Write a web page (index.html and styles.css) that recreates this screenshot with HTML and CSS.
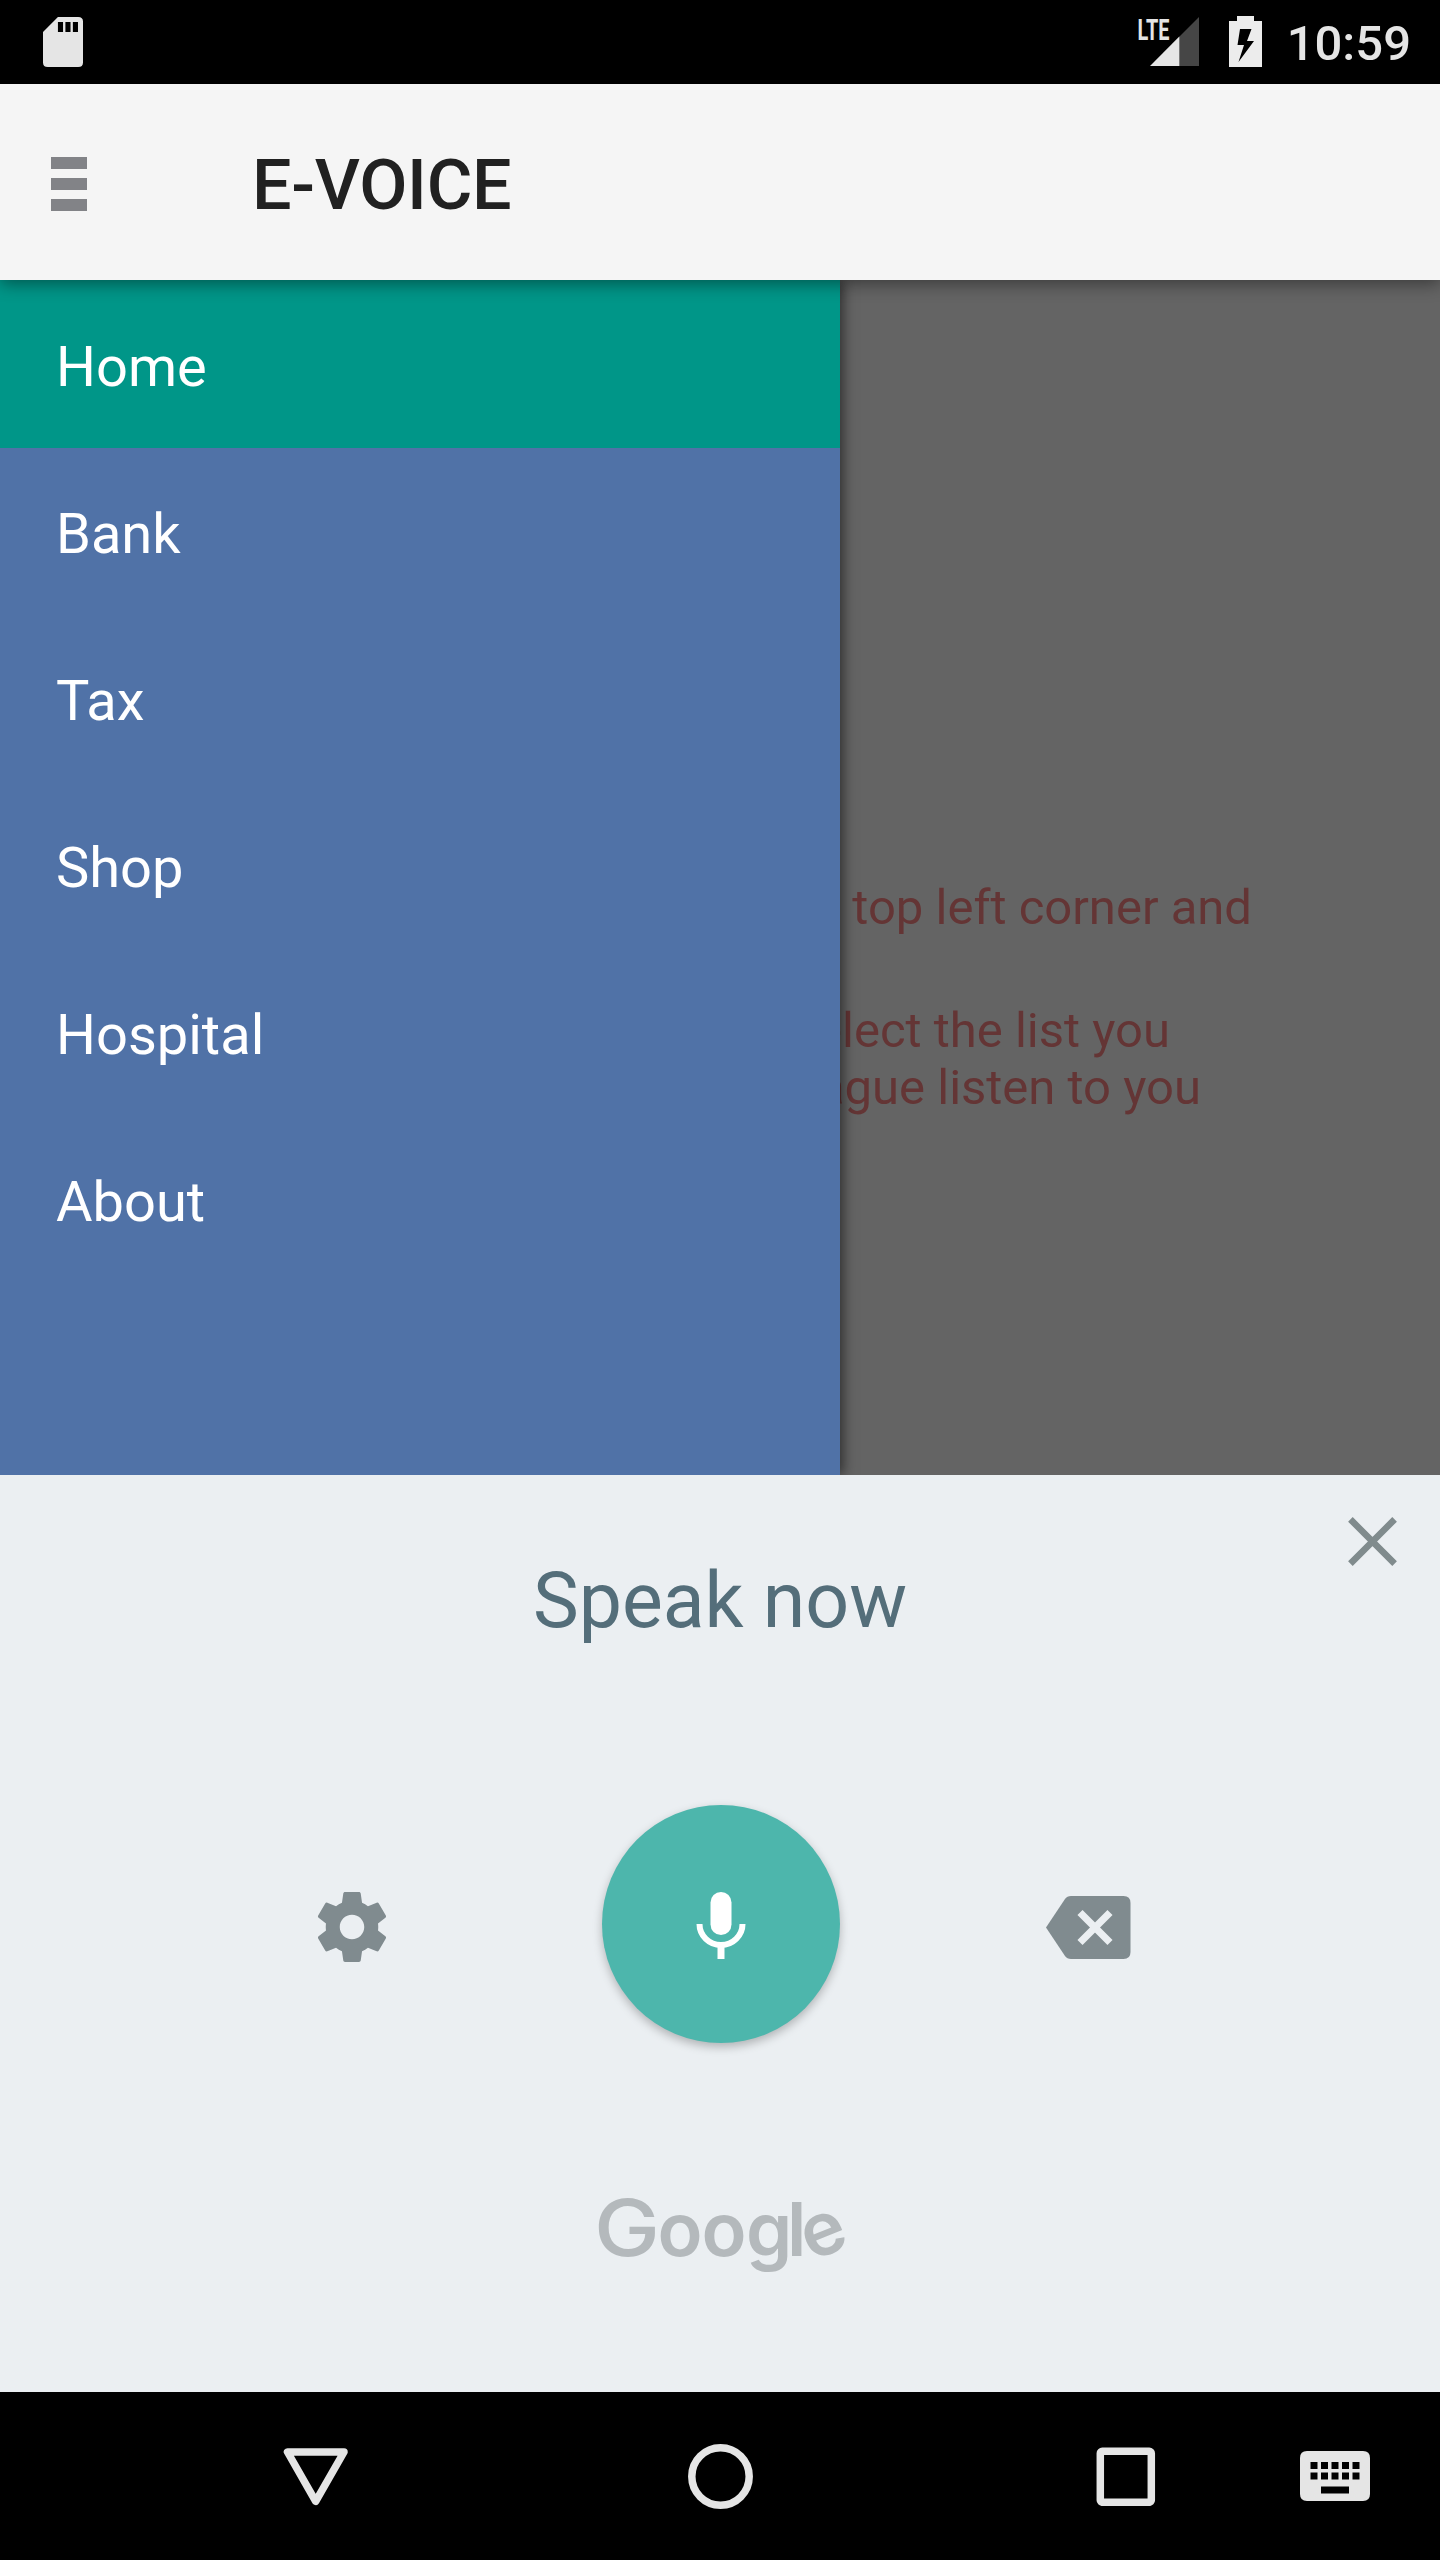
FILE: index.html
```html
<!DOCTYPE html>
<html lang="en">
<head>
<meta charset="utf-8">
<title>E-VOICE</title>
<link rel="stylesheet" href="styles.css">
</head>
<body>
<div class="screen">
  <header class="status">
    <svg class="sd" width="40" height="50" viewBox="0 0 37.5 50" preserveAspectRatio="none"><path fill="#e5e5e5" fill-rule="evenodd" d="M14 0H33Q37.500 0 37.500 4.500V45.500Q37.500 50 33 50H4.500Q0 50 0 45.500V15ZM14 5v10h4.800V5zM21 5v10h4.800V5zM28 5v10h4.800V5z"/></svg>
    <div class="status-right">
      <svg class="signal" width="62" height="50" viewBox="0 0 62 50">
        <path fill="#464646" d="M61 0V49H41V20Z"/><path fill="#e5e5e5" d="M12 49L41.300 19.500V49Z"/>
        <text class="lte" x="-.5" y="22.500" textLength="32" lengthAdjust="spacingAndGlyphs">LTE</text>
      </svg>
      <svg class="battery" width="33" height="51" viewBox="0 0 33 51"><path fill="#ececec" fill-rule="evenodd" d="M8 0H25V5H33V51H0V5H8ZM11 13L8.500 29H15L9.500 46L25 25H18L22.500 13Z"/></svg>
      <span class="clock">10:59</span>
    </div>
  </header>
  <div class="appbar">
    <div class="burger"><i></i><i></i><i></i></div>
    <h1>E-VOICE</h1>
  </div>
  <main class="content">
    <nav class="drawer">
      <a class="active">Home</a><a>Bank</a><a>Tax</a><a>Shop</a><a>Hospital</a><a>About</a>
    </nav>
    <div class="page">
      <p class="l1">top left corner and</p>
      <p class="l2">select the list you</p>
      <p class="l3">langague listen to you</p>
    </div>
  </main>
  <section class="voice">
    <div class="close-row"><svg width="49" height="49" viewBox="0 0 49 49"><path stroke="#808b8d" stroke-width="6.500" d="M2.400 2.400L46.600 46.600M46.600 2.400L2.400 46.600"/></svg></div>
    <h2>Speak now</h2>
    <div class="controls">
      <svg class="gear" width="70" height="70" viewBox="2 2 20 20"><path fill="#808b8f" d="M19.430 12.980c.04-.32.070-.64.070-.98s-.03-.66-.07-.98l2.110-1.650c.19-.15.240-.42.120-.64l-2-3.460c-.12-.22-.39-.3-.61-.22l-2.490 1c-.52-.4-1.080-.73-1.690-.98l-.38-2.650C14.460 2.180 14.250 2 14 2h-4c-.25 0-.46.180-.49.420l-.38 2.650c-.61.250-1.170.590-1.690.98l-2.490-1c-.23-.09-.49 0-.61.220l-2 3.460c-.13.220-.07.490.12.640l2.110 1.650c-.04.320-.07.650-.07.980s.03.660.07.980l-2.110 1.650c-.19.150-.24.420-.12.640l2 3.460c.12.220.39.300.61.220l2.490-1c.52.400 1.080.730 1.690.980l.38 2.650c.03.240.24.420.49.420h4c.25 0 .46-.18.490-.42l.38-2.650c.61-.25 1.170-.59 1.690-.98l2.490 1c.23.090.49 0 .61-.22l2-3.460c.12-.22.070-.49-.12-.64l-2.110-1.650zM12 15.500c-1.930 0-3.500-1.570-3.500-3.500s1.570-3.500 3.500-3.500 3.500 1.570 3.500 3.500-1.570 3.500-3.500 3.500z"/></svg>
      <div class="mic"><svg width="50" height="67" viewBox="0 0 50 67"><rect x="14.500" y="0" width="21" height="43" rx="10.500" fill="#fff"/><path fill="none" stroke="#fff" stroke-width="6" d="M3.500 32A21.500 21 0 0 0 46.500 32"/><path fill="#fff" d="M21.500 53h7v14h-7z"/></svg></div>
      <svg class="back" width="85" height="63" viewBox="0 0 85 63"><path fill="#808b8f" d="M0 31.500L19 3Q21 0 25 0H77.500Q84.500 0 84.500 7V56Q84.500 63 77.500 63H25Q21 63 19 60Z"/><path stroke="#ebeff2" stroke-width="7.200" d="M34 16.500L64 46.500M64 16.500L34 46.500"/></svg>
    </div>
    <svg class="google" width="244" height="90" viewBox="0 0 244 90"><text class="cap" x="-4" y="62.500" textLength="66" lengthAdjust="spacingAndGlyphs">G</text><text x="59.500 103.500 148 189 213" y="63 63 62.500 62.500 68.500" rotate="0 0 0 0 -22">oogle</text></svg>
  </section>
  <footer class="navbar">
    <svg width="66" height="62" viewBox="0 0 66 62"><path fill="none" stroke="#e5e5e5" stroke-width="7.500" stroke-linejoin="round" d="M4.500 7H61L32.700 56.300Z"/></svg>
    <svg width="67" height="66" viewBox="0 0 67 66"><circle cx="33.500" cy="33.500" r="28.700" fill="none" stroke="#e5e5e5" stroke-width="7.500"/></svg>
    <svg width="60" height="60" viewBox="0 0 60 60"><rect x="4.300" y="5.300" width="51" height="51" rx="2" fill="none" stroke="#e5e5e5" stroke-width="7.500"/></svg>
    <svg width="70" height="50" viewBox="0 0 70 50"><path fill="#e5e5e5" fill-rule="evenodd" d="M7 0H63Q70 0 70 7V43Q70 50 63 50H7Q0 50 0 43V7Q0 0 7 0ZM10.500 11v7h7v-7zM21 11v7h7v-7zM31.500 11v7h7v-7zM42 11v7h7v-7zM52.500 11v7h7v-7zM10.500 21.500v7h7v-7zM21 21.500v7h7v-7zM31.500 21.500v7h7v-7zM42 21.500v7h7v-7zM52.500 21.500v7h7v-7zM21 35.500v7h28v-7z"/></svg>
  </footer>
</div>
</body>
</html>
```
FILE: styles.css
```css
* { box-sizing: border-box; margin: 0; padding: 0; }
body { font-family: Roboto, "Liberation Sans", sans-serif; }
svg { display: block; flex: none; }
.screen { width: 1440px; height: 2560px; display: flex; flex-direction: column; overflow: hidden; }
.status { height: 84px; flex: none; background: #000; display: flex; justify-content: space-between; padding: 0 29px 0 43px; }
.sd { margin-top: 17px; }
.status-right { display: flex; }
.signal { margin: 17px 29px 0 0; overflow: visible; }
.lte { font: 700 29px Roboto, sans-serif; fill: #e5e5e5; }
.battery { margin: 16px 25px 0 0; }
.clock { font-size: 49px; font-weight: 500; line-height: 58px; color: #e5e5e5; margin-top: 15px; }
.appbar { height: 196px; flex: none; background: #f5f5f5; display: flex; padding-left: 51px; position: relative; z-index: 2; box-shadow: 0 4px 16px rgba(0,0,0,.42); }
.burger { width: 36px; margin: 73px 165px 0 0; display: flex; flex-direction: column; gap: 9px; }
.burger i { height: 12px; background: #828387; }
h1 { font-size: 70px; font-weight: 500; line-height: 82px; letter-spacing: -.3px; color: #212121; margin-top: 60px; }
.content { height: 1195px; flex: none; display: flex; background: #646464; overflow: hidden; }
.drawer { width: 840px; flex: none; background: #5072a7; box-shadow: 3px 0 12px rgba(0,0,0,.55); position: relative; z-index: 1; }
.drawer a { display: flex; align-items: center; height: 167px; padding: 4px 0 0 56px; color: #fff; font-size: 56px; }
.drawer .active { background: #009688; height: 168px; padding-top: 5px; }
.page { flex: none; width: 600px; padding: 599px 0 0; color: #643535; font-size: 49px; line-height: 57px; display: flex; flex-direction: column; align-items: flex-end; }
.page p { white-space: nowrap; }
.l1 { margin: 0 188px 66px 0; }
.l2 { margin-right: 270px; }
.l3 { margin-right: 239px; }
.voice { height: 917px; flex: none; background: #ebeff2; position: relative; z-index: 3; display: flex; flex-direction: column; align-items: center; }
.close-row { align-self: flex-end; padding: 42px 43px 0 0; }
h2 { font-size: 77px; font-weight: 400; line-height: 90px; color: #546e7a; margin-top: -10px; }
.controls { align-self: stretch; display: flex; padding-left: 317px; margin-top: 159px; }
.gear { margin: 87px 215px 0 0; }
.mic { width: 238px; height: 238px; border-radius: 50%; background: #4db6ac; display: flex; justify-content: center; padding-top: 87px; box-shadow: 0 4px 10px rgba(0,0,0,.25); }
.back { margin: 91px 0 0 206px; }
.google { margin-top: 150px; overflow: visible; }
.google text { font: 600 74px Inter, sans-serif; fill: #b4b9bc; }
.google .cap { font-size: 79px; font-weight: 500; }
.navbar { flex: 1; background: #000; display: flex; align-items: center; padding-left: 283px; }
.navbar svg:nth-child(2) { margin-left: 338px; }
.navbar svg:nth-child(3) { margin-left: 342px; }
.navbar svg:nth-child(4) { margin-left: 144px; }
```
